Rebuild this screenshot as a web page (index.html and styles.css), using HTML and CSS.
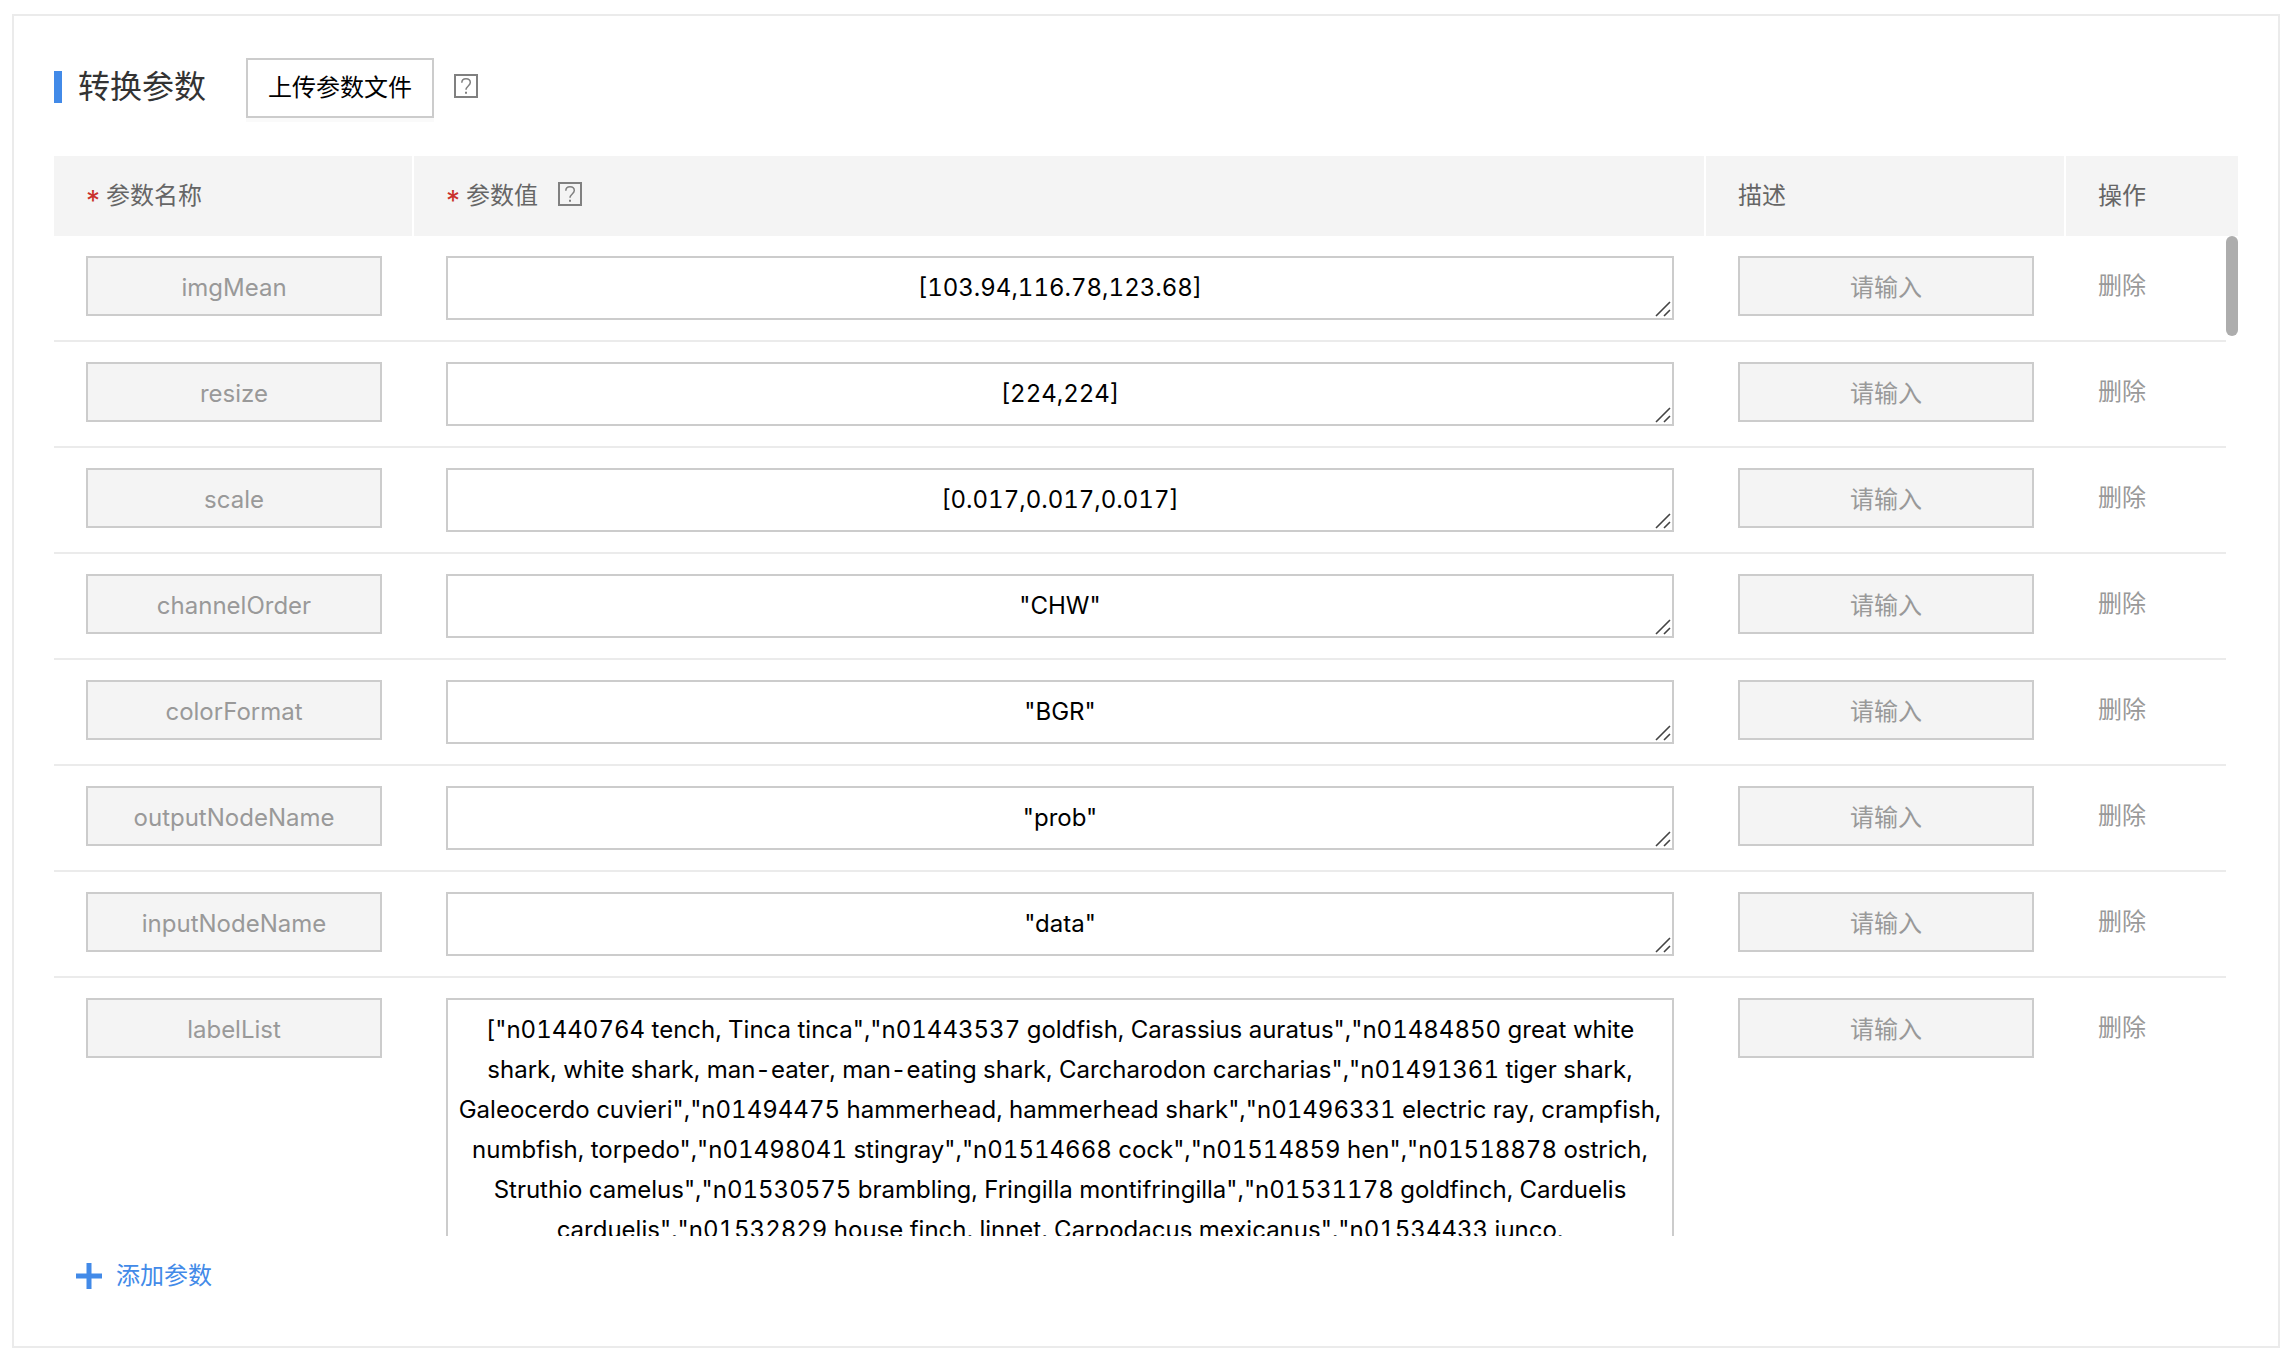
FILE: index.html
```html
<!DOCTYPE html>
<html lang="zh-CN">
<head>
<meta charset="utf-8">
<meta name="viewport" content="width=device-width, initial-scale=1">
<title>转换参数</title>
<link rel="stylesheet" href="styles.css">
</head>
<body>
<svg class="sprite" aria-hidden="true">
  <symbol id="icon-help" viewBox="0 0 24 24">
    <path d="M1 1h22v22H1z" fill="none" stroke="currentColor" stroke-width="2"/>
    <path d="M7.800 8.800C7.800 6 9.600 4.700 12 4.700s4.300 1.500 4.300 3.900c0 3.200-4.300 3.600-4.300 7.200" fill="none" stroke="currentColor" stroke-width="1.500"/>
    <path d="M11 17.700h2v2h-2z" fill="currentColor"/>
  </symbol>
  <symbol id="icon-grip" viewBox="0 0 16 16">
    <path d="M1 15L15 1M9 15l6-6" fill="none" stroke="currentColor" stroke-width="1.600"/>
  </symbol>
</svg>
<main class="panel">
  <header class="panel-head">
    <h1 class="title">转换参数</h1>
    <button class="upload" type="button">上传参数文件</button>
    <svg class="help help-head" role="img" aria-label="帮助"><use href="#icon-help"/></svg>
  </header>

  <table class="grid grid-head">
    <colgroup><col class="col-name"><col><col class="col-desc"><col class="col-action-head"></colgroup>
    <thead>
      <tr>
        <th><span class="th"><span class="star">*</span>参数名称</span></th>
        <th><span class="th"><span class="star">*</span>参数值<svg class="help help-th" role="img" aria-label="帮助"><use href="#icon-help"/></svg></span></th>
        <th><span class="th">描述</span></th>
        <th><span class="th">操作</span></th>
      </tr>
    </thead>
  </table>

  <div class="body-wrap">
    <div class="scroll">
      <table class="grid grid-body">
        <colgroup><col class="col-name"><col><col class="col-desc"><col class="col-action"></colgroup>
        <tbody>
          <tr>
            <td><input class="field" aria-label="参数名称" value="imgMean" disabled></td>
            <td><div class="area"><textarea class="value" aria-label="参数值" rows="1">[103.94,116.78,123.68]</textarea><svg class="grip"><use href="#icon-grip"/></svg></div></td>
            <td><input class="field" aria-label="描述" placeholder="请输入" disabled></td>
            <td><button class="remove" type="button">删除</button></td>
          </tr>
          <tr>
            <td><input class="field" aria-label="参数名称" value="resize" disabled></td>
            <td><div class="area"><textarea class="value" aria-label="参数值" rows="1">[224,224]</textarea><svg class="grip"><use href="#icon-grip"/></svg></div></td>
            <td><input class="field" aria-label="描述" placeholder="请输入" disabled></td>
            <td><button class="remove" type="button">删除</button></td>
          </tr>
          <tr>
            <td><input class="field" aria-label="参数名称" value="scale" disabled></td>
            <td><div class="area"><textarea class="value" aria-label="参数值" rows="1">[0.017,0.017,0.017]</textarea><svg class="grip"><use href="#icon-grip"/></svg></div></td>
            <td><input class="field" aria-label="描述" placeholder="请输入" disabled></td>
            <td><button class="remove" type="button">删除</button></td>
          </tr>
          <tr>
            <td><input class="field" aria-label="参数名称" value="channelOrder" disabled></td>
            <td><div class="area"><textarea class="value" aria-label="参数值" rows="1">"CHW"</textarea><svg class="grip"><use href="#icon-grip"/></svg></div></td>
            <td><input class="field" aria-label="描述" placeholder="请输入" disabled></td>
            <td><button class="remove" type="button">删除</button></td>
          </tr>
          <tr>
            <td><input class="field" aria-label="参数名称" value="colorFormat" disabled></td>
            <td><div class="area"><textarea class="value" aria-label="参数值" rows="1">"BGR"</textarea><svg class="grip"><use href="#icon-grip"/></svg></div></td>
            <td><input class="field" aria-label="描述" placeholder="请输入" disabled></td>
            <td><button class="remove" type="button">删除</button></td>
          </tr>
          <tr>
            <td><input class="field" aria-label="参数名称" value="outputNodeName" disabled></td>
            <td><div class="area"><textarea class="value" aria-label="参数值" rows="1">"prob"</textarea><svg class="grip"><use href="#icon-grip"/></svg></div></td>
            <td><input class="field" aria-label="描述" placeholder="请输入" disabled></td>
            <td><button class="remove" type="button">删除</button></td>
          </tr>
          <tr>
            <td><input class="field" aria-label="参数名称" value="inputNodeName" disabled></td>
            <td><div class="area"><textarea class="value" aria-label="参数值" rows="1">"data"</textarea><svg class="grip"><use href="#icon-grip"/></svg></div></td>
            <td><input class="field" aria-label="描述" placeholder="请输入" disabled></td>
            <td><button class="remove" type="button">删除</button></td>
          </tr>
          <tr>
            <td><input class="field" aria-label="参数名称" value="labelList" disabled></td>
            <td><div class="area"><textarea class="value" aria-label="参数值" rows="8">["n01440764 tench, Tinca tinca","n01443537 goldfish, Carassius auratus","n01484850 great white shark, white shark, man-eater, man-eating shark, Carcharodon carcharias","n01491361 tiger shark, Galeocerdo cuvieri","n01494475 hammerhead, hammerhead shark","n01496331 electric ray, crampfish, numbfish, torpedo","n01498041 stingray","n01514668 cock","n01514859 hen","n01518878 ostrich, Struthio camelus","n01530575 brambling, Fringilla montifringilla","n01531178 goldfinch, Carduelis carduelis","n01532829 house finch, linnet, Carpodacus mexicanus","n01534433 junco,</textarea><svg class="grip"><use href="#icon-grip"/></svg></div></td>
            <td><input class="field" aria-label="描述" placeholder="请输入" disabled></td>
            <td><button class="remove" type="button">删除</button></td>
          </tr>
        </tbody>
      </table>
    </div>
    <div class="thumb"></div>
  </div>

  <button class="add" type="button">
    <svg class="plus" viewBox="0 0 26 26" aria-hidden="true"><path d="M0 13h26M13 0v26" stroke="currentColor" stroke-width="5"/></svg>
    添加参数
  </button>
</main>
</body>
</html>
```
FILE: styles.css
```css
* { box-sizing: border-box; }

body {
  margin: 0;
  padding: 14px 10px 10px 12px;
  background: #fff;
  color: #333;
  font: 24px/40px Inter, "Noto Sans CJK SC", sans-serif;
}

button, input, textarea { font: inherit; margin: 0; }

.sprite { position: absolute; width: 0; height: 0; }

.panel {
  padding: 42px 40px 40px;
  border: 2px solid #ebebeb;
}

.panel-head {
  display: flex;
  align-items: flex-start;
  margin-bottom: 38px;
}

.title {
  display: flex;
  align-items: center;
  gap: 16px;
  margin: 0 40px 0 0;
  font-size: 32px;
  line-height: 57px;
  font-weight: 400;
}

.title::before {
  content: "";
  width: 8px;
  height: 32px;
  background: #428ae8;
}

.upload {
  height: 60px;
  padding: 0 20px;
  border: 2px solid #ccc;
  background: #fff;
  color: #000;
  box-shadow: 0 4px 0 #fafafa;
}

.help {
  width: 24px;
  height: 24px;
  margin-left: 20px;
  color: #808080;
}

.help-head { margin-top: 16px; }
.help-th { margin-bottom: 4px; }

.grid {
  width: 100%;
  table-layout: fixed;
  border-spacing: 0;
}

.col-name, .col-desc { width: 360px; }
.col-action-head { width: 172px; }
.col-action { width: 160px; }

th {
  height: 80px;
  padding: 0 32px;
  background: #f4f4f4;
  border-right: 2px solid #fff;
  color: #666;
  font-weight: 400;
  text-align: left;
}

th:last-child { border-right: 0; }

.th { display: flex; align-items: center; height: 40px; }

.star {
  width: 20px;
  padding-top: 10px;
  color: #c9302c;
  font-size: 28px;
}

.body-wrap { position: relative; }

.scroll {
  max-height: 1000px;
  padding-right: 12px;
  overflow-y: auto;
  scrollbar-width: none;
}

.thumb {
  position: absolute;
  top: 0;
  right: 0;
  width: 12px;
  height: 100px;
  border-radius: 6px;
  background: #adadad;
}

td {
  padding: 20px 32px;
  border-bottom: 2px solid #ebebeb;
  vertical-align: top;
}

.field {
  display: block;
  width: 100%;
  height: 60px;
  padding: 2px 16px 0;
  border: 2px solid #ccc;
  border-radius: 0;
  background: #f4f4f4;
  color: #999;
  text-align: center;
}

.field::placeholder { color: #999; }

.area { position: relative; }

.value {
  display: block;
  width: 100%;
  padding: 10px 8px;
  border: 2px solid #ccc;
  border-radius: 0;
  background: #fff;
  color: #000;
  font-variant-numeric: tabular-nums;
  text-align: center;
  resize: none;
  overflow: hidden;
}

.grip {
  position: absolute;
  right: 3px;
  bottom: 3px;
  width: 16px;
  height: 16px;
  color: #444;
}

.remove {
  height: 60px;
  padding: 0;
  border: 0;
  background: none;
  color: #999;
}

.add {
  display: flex;
  align-items: center;
  gap: 14px;
  height: 60px;
  margin-top: 10px;
  padding: 0 22px;
  border: 0;
  background: none;
  color: #428ae8;
}

.plus { width: 26px; height: 26px; }
```
